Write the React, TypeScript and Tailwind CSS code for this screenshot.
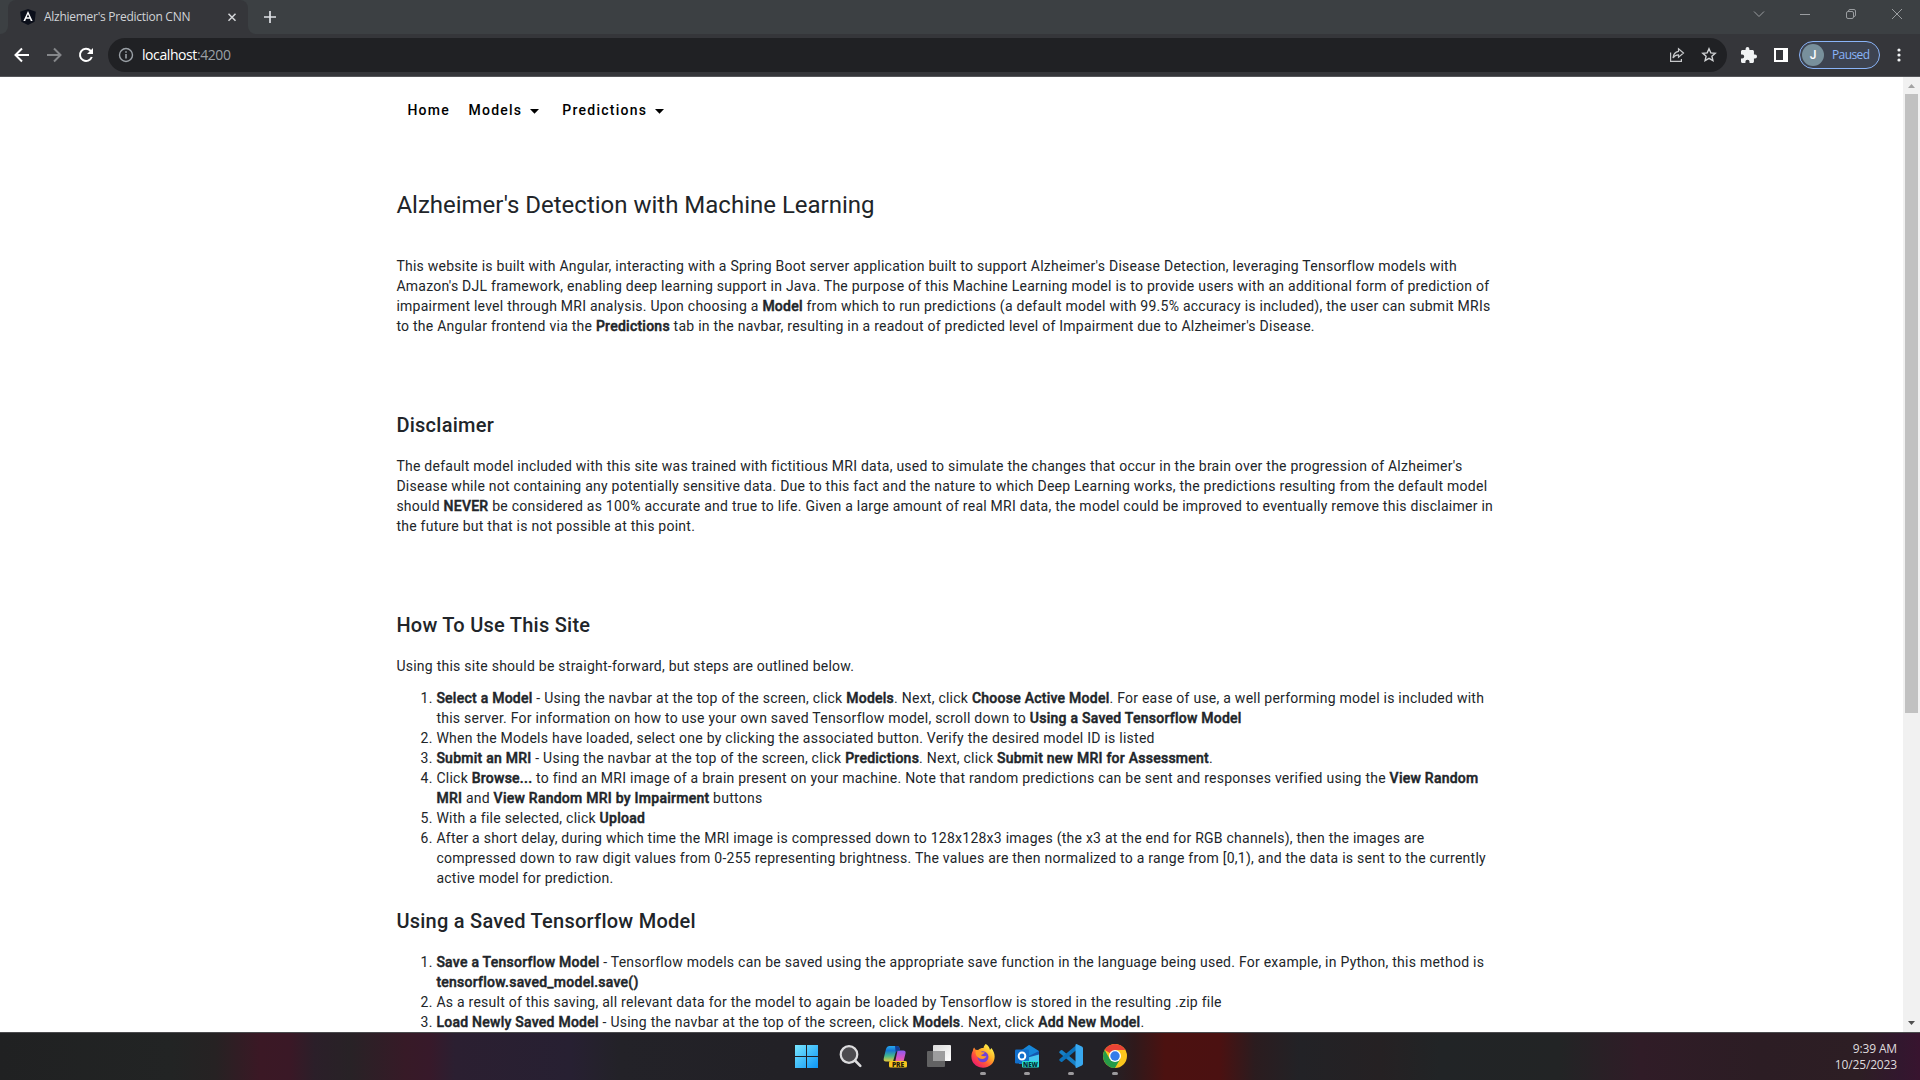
import React from 'react';

const B = ({ children }: { children: React.ReactNode }) => (
  <b className="font-medium [-webkit-text-stroke:0.45px_#212529]">{children}</b>
);

const Line = ({ children }: { children: React.ReactNode }) => (
  <span className="block whitespace-nowrap">{children}</span>
);

const Heading = ({ children, className }: { children: React.ReactNode; className: string }) => (
  <h2 className={`text-[20px] leading-8 font-medium tracking-[0.0125em] ${className}`}>{children}</h2>
);

function TabStrip() {
  return (
    <div className="flex h-[34px] bg-[#3c4043]">
      <div className="flex w-2 bg-[#35363a]">
        <div className="w-full rounded-br-lg bg-[#3c4043]" />
      </div>
      <div className="flex w-[240px] items-center rounded-t-lg bg-[#35363a] pl-3">
        <svg className="h-4 w-4" viewBox="0 0 16 16">
          <path d="M8 0l7.8 2.7-1.2 10L8 16l-6.6-3.3L.2 2.7z" fill="#0b0f1a" />
          <path d="M8 2.1L3.4 12h1.8l.9-2.2h3.8l.9 2.2h1.8zM8 5.2l1.3 3.1H6.7z" fill="#fff" />
        </svg>
        <span className="ml-2 w-[180px] whitespace-nowrap text-[12px] leading-4 tracking-[-0.27px] text-[#d0d3d7]">Alzhiemer's Prediction CNN</span>
        <svg className="h-4 w-4" viewBox="0 0 16 16" stroke="#d5d7da" strokeWidth="1.5">
          <path d="M4.500 4.800l7 7M11.500 4.800l-7 7" />
        </svg>
      </div>
      <div className="flex w-2 bg-[#35363a]">
        <div className="w-full rounded-bl-lg bg-[#3c4043]" />
      </div>
      <svg className="mt-[9px] ml-[6px] h-4 w-4" viewBox="0 0 16 16" stroke="#dee1e6" strokeWidth="1.7">
        <path d="M8 2v12M2 8h12" />
      </svg>
      <div className="mt-[7px] ml-auto mr-4 flex gap-[32px]">
        <svg className="h-[14px] w-[14px]" viewBox="0 0 14 14" fill="none" stroke="#9a9da0"><path d="M2 4.500l5 5 5-5" /></svg>
        <svg className="h-[14px] w-[14px]" viewBox="0 0 14 14" fill="none" stroke="#9a9da0"><path d="M2 7.500h10" /></svg>
        <svg className="h-[14px] w-[14px]" viewBox="0 0 14 14" fill="none" stroke="#9a9da0"><rect x="2.500" y="4.500" width="7" height="7" rx="1.500" /><path d="M4.500 4.500V4A1.500 1.500 0 0 1 6 2.500h4A1.500 1.500 0 0 1 11.500 4v4a1.500 1.500 0 0 1-1.500 1.500h-.5" /></svg>
        <svg className="h-[14px] w-[14px]" viewBox="0 0 14 14" fill="none" stroke="#9a9da0"><path d="M2 2l10 10M12 2L2 12" /></svg>
      </div>
    </div>
  );
}

function Toolbar() {
  return (
    <div className="flex h-[43px] items-center border-b border-[#55565a] bg-[#35363a] pl-3">
      <svg className="h-5 w-5" viewBox="0 0 20 20" fill="none" stroke="#fff" strokeWidth="2"><path d="M17 10H4M10 3.500L3.500 10l6.500 6.500" /></svg>
      <svg className="ml-3 h-5 w-5" viewBox="0 0 20 20" fill="none" stroke="#85878a" strokeWidth="2"><path d="M3 10h13M10 3.500l6.500 6.500-6.500 6.500" /></svg>
      <svg className="ml-3 h-5 w-5" viewBox="0 0 20 20" fill="none" stroke="#fff" strokeWidth="2"><path d="M15.800 12A6.100 6.100 0 1 1 14.500 5.700L16 7.400" /><path d="M17 3v6h-6z" fill="#fff" stroke="none" /></svg>
      <div className="ml-3 flex h-[34px] w-[1619px] items-center rounded-full bg-[#202124] pl-[10px]">
        <svg className="h-4 w-4" viewBox="0 0 16 16" fill="none" stroke="#9aa0a6" strokeWidth="1.400"><circle cx="8" cy="8" r="6.500" /><path d="M8 7v4.500M8 4.300v1.500" strokeWidth="1.600" /></svg>
        <span className="ml-2 text-[14px] leading-5 tracking-[-0.42px] text-white">localhost<span className="text-[#9aa0a6]">:4200</span></span>
        <svg className="ml-auto h-4 w-4" viewBox="0 0 16 16" fill="none" stroke="#c6c8ca" strokeWidth="1.200"><path d="M1.600 5.500v8.900h10.800v-2.500" /><path d="M9.500 1.800l5 4.200-5 4.200V7.800C7 7.800 5.300 8.800 4 11c.3-3.500 2.200-6.200 5.500-6.700z" /></svg>
        <svg className="ml-4 mr-[10px] h-4 w-4" viewBox="0 0 16 16" fill="none" stroke="#d0d2d4" strokeWidth="1.400"><path d="M8 1.800l1.800 4.100 4.400.4-3.300 2.900 1 4.400L8 11.300l-3.900 2.300 1-4.400-3.300-2.900 4.400-.4z" /></svg>
      </div>
      <svg className="ml-[14px] h-[16px] w-[16px]" viewBox="2 1 21 21" fill="#f1f3f4"><path d="M20.500 11H19V7c0-1.100-.9-2-2-2h-4V3.500a2.500 2.500 0 0 0-5 0V5H4c-1.100 0-2 .9-2 2v3.800h1.500a2.700 2.700 0 0 1 0 5.400H2V20c0 1.100.9 2 2 2h3.800v-1.500a2.700 2.700 0 0 1 5.400 0V22H17c1.100 0 2-.9 2-2v-4h1.500a2.500 2.500 0 0 0 0-5z" /></svg>
      <svg className="ml-[17px] h-[14px] w-[14px]" viewBox="0 0 14 14"><path fill="#fff" d="M0 0h14v14H0z" /><path fill="#35363a" d="M2 2h7v10H2z" /></svg>
      <div className="ml-[11px] flex h-7 w-[81px] items-center rounded-full border border-[#8ab4f8] bg-[#3d4350] pl-[2px]">
        <span className="flex h-[22px] w-[22px] items-center justify-center rounded-full bg-[#78909c] font-['Roboto'] text-[12px] font-medium text-white">J</span>
        <span className="ml-2 text-[12px] leading-4 tracking-[-0.6px] text-[#8ab4f8]">Paused</span>
      </div>
      <svg className="ml-[17px] h-4 w-[4px]" viewBox="0 0 4 16" fill="#f1f3f4"><circle cx="2" cy="3" r="1.600" /><circle cx="2" cy="8" r="1.600" /><circle cx="2" cy="13" r="1.600" /></svg>
    </div>
  );
}

const Caret = () => (
  <svg className="ml-[8px] mt-[2px] h-[5px] w-[9px]" viewBox="0 0 9 5"><path d="M0 0h9L4.500 4.800z" /></svg>
);

function Page() {
  return (
    <main className="h-full w-[1903px] overflow-hidden bg-white pl-[396.4px] font-['Roboto',sans-serif] text-[14px] leading-5 tracking-[0.0178571em] text-[#212529]">
      <nav className="flex h-[66px] items-center pl-[11px] text-[14px] font-medium tracking-[1.25px] text-black">
        <span>Home</span>
        <span className="ml-[18.500px] flex items-center">Models<Caret /></span>
        <span className="ml-[23px] flex items-center">Predictions<Caret /></span>
      </nav>
      <h1 className="mt-[46px] text-[24px] leading-8 font-normal tracking-normal">Alzheimer's Detection with Machine Learning</h1>
      <p className="mt-[35px]">
        <Line>This website is built with Angular, interacting with a Spring Boot server application built to support Alzheimer's Disease Detection, leveraging Tensorflow models with</Line>
        <Line>Amazon's DJL framework, enabling deep learning support in Java. The purpose of this Machine Learning model is to provide users with an additional form of prediction of</Line>
        <Line>impairment level through MRI analysis. Upon choosing a <B>Model</B> from which to run predictions (a default model with 99.5% accuracy is included), the user can submit MRIs</Line>
        <Line>to the Angular frontend via the <B>Predictions</B> tab in the navbar, resulting in a readout of predicted level of Impairment due to Alzheimer's Disease.</Line>
      </p>
      <Heading className="mt-[73px]">Disclaimer</Heading>
      <p className="mt-[15px]">
        <Line>The default model included with this site was trained with fictitious MRI data, used to simulate the changes that occur in the brain over the progression of Alzheimer's</Line>
        <Line>Disease while not containing any potentially sensitive data. Due to this fact and the nature to which Deep Learning works, the predictions resulting from the default model</Line>
        <Line>should <B>NEVER</B> be considered as 100% accurate and true to life. Given a large amount of real MRI data, the model could be improved to eventually remove this disclaimer in</Line>
        <Line>the future but that is not possible at this point.</Line>
      </p>
      <Heading className="mt-[73px]">How To Use This Site</Heading>
      <p className="mt-[15px]">Using this site should be straight-forward, but steps are outlined below.</p>
      <ol className="mt-3 list-decimal pl-10">
        <li>
          <Line><B>Select a Model</B> - Using the navbar at the top of the screen, click <B>Models</B>. Next, click <B>Choose Active Model</B>. For ease of use, a well performing model is included with</Line>
          <Line>this server. For information on how to use your own saved Tensorflow model, scroll down to <B>Using a Saved Tensorflow Model</B></Line>
        </li>
        <li>When the Models have loaded, select one by clicking the associated button. Verify the desired model ID is listed</li>
        <li><B>Submit an MRI</B> - Using the navbar at the top of the screen, click <B>Predictions</B>. Next, click <B>Submit new MRI for Assessment</B>.</li>
        <li>
          <Line>Click <B>Browse...</B> to find an MRI image of a brain present on your machine. Note that random predictions can be sent and responses verified using the <B>View Random</B></Line>
          <Line><B>MRI</B> and <B>View Random MRI by Impairment</B> buttons</Line>
        </li>
        <li>With a file selected, click <B>Upload</B></li>
        <li>
          <Line>After a short delay, during which time the MRI image is compressed down to 128x128x3 images (the x3 at the end for RGB channels), then the images are</Line>
          <Line>compressed down to raw digit values from 0-255 representing brightness. The values are then normalized to a range from [0,1), and the data is sent to the currently</Line>
          <Line>active model for prediction.</Line>
        </li>
      </ol>
      <Heading className="mt-[17px]">Using a Saved Tensorflow Model</Heading>
      <ol className="mt-[15px] list-decimal pl-10">
        <li>
          <Line><B>Save a Tensorflow Model</B> - Tensorflow models can be saved using the appropriate save function in the language being used. For example, in Python, this method is</Line>
          <Line><B>tensorflow.saved_model.save()</B></Line>
        </li>
        <li>As a result of this saving, all relevant data for the model to again be loaded by Tensorflow is stored in the resulting .zip file</li>
        <li><B>Load Newly Saved Model</B> - Using the navbar at the top of the screen, click <B>Models</B>. Next, click <B>Add New Model</B>.</li>
      </ol>
    </main>
  );
}

function Scrollbar() {
  return (
    <div className="flex w-[17px] flex-col items-center bg-[#f1f1f1]">
      <svg className="h-[17px] w-[17px]" viewBox="0 0 17 17"><path d="M5 11h7L8.500 7z" fill="#a3a3a3" /></svg>
      <div className="h-[619px] w-[13px] bg-[#c1c1c1]" />
      <svg className="mt-auto h-[17px] w-[17px]" viewBox="0 0 17 17"><path d="M5 6h7l-3.500 4z" fill="#505050" /></svg>
    </div>
  );
}

const TaskIcon = ({ children, running }: { children: React.ReactNode; running?: boolean }) => (
  <div className="flex w-11 flex-col items-center pt-[11px]">
    <svg className="h-6 w-6" viewBox="0 0 24 24">{children}</svg>
    {running && <div className="mt-[4px] h-[3px] w-[6px] rounded-full bg-[#9c9a9d]" />}
  </div>
);

function Taskbar() {
  return (
    <footer className="flex h-[48px] border-t border-[#4b4b4e] bg-[linear-gradient(90deg,#202122_0,#222424_170px,#262223_215px,#3b1825_260px,#3a1826_290px,#2b1f29_315px,#282226_350px,#371a27_405px,#37192a_430px,#2b1f31_455px,#272032_570px,#232228_620px,#222126_780px,#232126_1110px,#30191b_1135px,#4c1110_1165px,#4b1111_1220px,#2b1c1f_1255px,#222226_1300px,#252123_1380px,#212426_1440px,#222425_1560px,#301c27_1640px,#2c1d24_1760px,#2d1e24_1860px,#32172e_1900px,#38142f_1920px)] pl-[785px] pr-[23px]">
      <TaskIcon>
        <defs><linearGradient id="win" x1="0" y1="0" x2="24" y2="24" gradientUnits="userSpaceOnUse"><stop stopColor="#7be8ff" /><stop offset="1" stopColor="#0a94f5" /></linearGradient></defs>
        <path fill="url(#win)" d="M0 1h11v11H0zM12 1h11v11H12zM0 13h11v11H0zM12 13h11v11H12z" />
      </TaskIcon>
      <TaskIcon>
        <circle cx="10" cy="10.500" r="8.300" fill="#4c4b4f" stroke="#dcdcde" strokeWidth="2.200" />
        <path d="M16 16.500l5.300 5.300" stroke="#dcdcde" strokeWidth="2.600" strokeLinecap="round" />
      </TaskIcon>
      <TaskIcon>
        <defs>
          <linearGradient id="cpa" x1="0" y1="0" x2="0" y2="1"><stop stopColor="#27a8ee" /><stop offset=".3" stopColor="#1677d2" /><stop offset=".65" stopColor="#45b88c" /><stop offset="1" stopColor="#e8c93a" /></linearGradient>
          <linearGradient id="cpb" x1="0" y1="0" x2="0" y2="1"><stop stopColor="#8c5cf0" /><stop offset=".5" stopColor="#d753c6" /><stop offset="1" stopColor="#fb8a64" /></linearGradient>
        </defs>
        <path fill="url(#cpb)" d="M14.500 6.500h5.700q3 0 2.300 3L20.400 18q-.8 3-4 3H9.500q2-.4 2.700-3z" />
        <path fill="url(#cpa)" d="M6.500 2H14q2.500 0 3.200 4.500h-2.500q-1.500 0-2.200 2.500L10 17.500H3q-3 0-2.200-3.500L3 5Q4 2 6.500 2z" />
        <path fill="#123d96" d="M12 2h2q2.500 0 3.200 4.500h-2.500q-1.300 0-2 2z" />
        <rect x="6" y="17" width="18" height="6.500" rx="1.600" fill="#f7c51e" />
        <text x="15" y="22.600" textAnchor="middle" fontSize="6.600" fontWeight="800" fontFamily="Open Sans" fill="#27200d">PRE</text>
      </TaskIcon>
      <TaskIcon>
        <defs><linearGradient id="tv" x1="0" y1="0" x2="1" y2="1"><stop stopColor="#d9d9d9" /><stop offset="1" stopColor="#fff" /></linearGradient></defs>
        <rect x="6" y="1" width="18" height="16" rx="1" fill="url(#tv)" />
        <rect x="0" y="7" width="18" height="16" rx="1" fill="#626263" />
        <path d="M6 7h12v10H6z" fill="#9d9d9e" />
      </TaskIcon>
      <TaskIcon running>
        <defs>
          <linearGradient id="ffx" x1="20" y1="3" x2="4" y2="22" gradientUnits="userSpaceOnUse"><stop stopColor="#fff14a" /><stop offset=".35" stopColor="#ffad25" /><stop offset=".65" stopColor="#ff5639" /><stop offset="1" stopColor="#ed1770" /></linearGradient>
        </defs>
        <path fill="url(#ffx)" d="M14.800 0c2.700 1.600 3.800 4 4.100 5.700 1.100-.7 1.500-1.700 1.500-1.700 5 6.400 3.700 13.100-.3 16.800C14 26 4.800 24 1.500 17.600-.2 14 .1 9.700 1.900 6.700c0 0 .1-1.800 1.200-3.200l1.500 2.200 2.500.2C9 4.300 11.200 3.900 12.500 4.100 12.600 2 14.800 0 14.800 0z" />
        <circle cx="12" cy="12.800" r="5.500" fill="#7042d7" />
        <path fill="#ff9b25" d="M5 6c3-.5 4.800 1 5.600 2.300h3c-.1 1.800-3.500 2.300-3.500 3.200 1.600.8 4 1.200 5.300.2-.3 3-5.300 4.700-8.800 1.300C4.500 11 4.100 8.500 5 6z" />
      </TaskIcon>
      <TaskIcon running>
        <path fill="#1687d9" d="M4 8L13.500 1.300Q14 .8 14.800 1.300L24 7v11.500L4 20z" />
        <path fill="#1557ae" d="M14 12L24 7v12H10z" />
        <path fill="#45c6f1" d="M13 13.500l11-3V20H8z" />
        <rect x="0" y="5.500" width="14" height="14" rx="1.300" fill="#126fcb" />
        <ellipse cx="7" cy="12" rx="3.300" ry="3.600" fill="none" stroke="#fff" strokeWidth="2" />
        <rect x="7" y="17" width="17" height="6.500" rx="1" fill="#27dfd2" />
        <text x="15.500" y="22.500" textAnchor="middle" fontSize="6.200" fontWeight="800" fontFamily="Open Sans" fill="#082f38">NEW</text>
      </TaskIcon>
      <TaskIcon running>
        <path fill="#167fc5" d="M.5 7.500l1.300-1.200q.8-.5 1.500 0L18 18.500v5L.6 9q-.7-.8-.1-1.500z" />
        <path fill="#0c72ba" d="M.5 16.500l1.300 1.200q.8.500 1.500 0L18 5.500v-5L.6 15q-.7.800-.1 1.500z" />
        <path fill="#38a8ef" d="M17.500 0l5.400 2.500q1.100.5 1.100 1.700v15.600q0 1.200-1.100 1.700L17.500 24q-1 0-1-1V1q0-1 1-1z" />
      </TaskIcon>
      <TaskIcon running>
        <circle cx="12" cy="12" r="12" fill="#fac51d" />
        <path fill="#e94335" d="M12 12L1.610 6A12 12 0 0 1 22.390 6H12z" />
        <path fill="#269b48" d="M1.610 6A12 12 0 0 0 12 24l5.200-9L12 12 6.800 15z" />
        <circle cx="12" cy="12" r="6" fill="#fff" />
        <circle cx="12" cy="12" r="4.700" fill="#347ce9" />
      </TaskIcon>
      <div className="ml-auto pt-[7.500px] text-right text-[12px] leading-4 tracking-[-0.15px] text-[#dfdbde]">
        <div>9:39 AM</div>
        <div>10/25/2023</div>
      </div>
    </footer>
  );
}

export default function App() {
  return (
    <div className="flex h-[1080px] w-[1920px] flex-col overflow-hidden bg-[#35363a] font-['Open_Sans','Noto_Sans',sans-serif]">
      <TabStrip />
      <Toolbar />
      <div className="flex h-[955px]">
        <Page />
        <Scrollbar />
      </div>
      <Taskbar />
    </div>
  );
}
